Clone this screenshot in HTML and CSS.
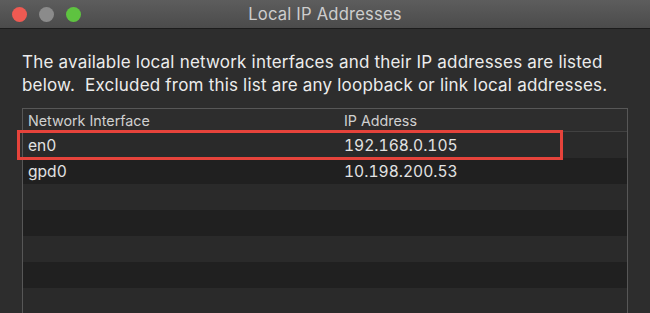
FILE: index.html
```html
<!DOCTYPE html>
<html lang="en">
<head>
  <meta charset="UTF-8" />
  <title>Local IP Addresses</title>
  <link rel="stylesheet" href="styles.css">
</head>
<body>
  <div class="window">
    <div class="titlebar">
      <div class="lights">
        <span class="light close"></span>
        <span class="light mini"></span>
        <span class="light zoom"></span>
      </div>
      <div class="title">Local IP Addresses</div>
      <div></div>
    </div>
    <div class="content">
      <p class="intro">The available local network interfaces and their IP addresses are listed below.&nbsp; Excluded from this list are any loopback or link local addresses.</p>
      <div class="table">
        <div class="row head">
          <div class="cell">Network Interface</div>
          <div class="cell">IP Address</div>
        </div>
        <div class="row">
          <div class="cell">en0</div>
          <div class="cell">192.168.0.105</div>
        </div>
        <div class="row">
          <div class="cell">gpd0</div>
          <div class="cell">10.198.200.53</div>
        </div>
        <div class="row"></div>
        <div class="row"></div>
        <div class="row"></div>
        <div class="row"></div>
        <div class="row"></div>
        <div class="mark"></div>
      </div>
    </div>
  </div>
</body>
</html>
```

FILE: styles.css
```css
body {
  margin: 0;
  padding: 0;
  background: #2d2d2d;
  font-family: 'Inter', 'Noto Sans', sans-serif;
  color: #e2e2e2;
}
.window {
  width: 650px;
  height: 313px;
  overflow: hidden;
  background: #2d2d2d;
}
.titlebar {
  height: 28px;
  display: grid;
  grid-template-columns: 1fr auto 1fr;
  align-items: center;
  background: linear-gradient(#5d5d5d, #4b4b4b);
  border-bottom: 1px solid #1c1c1c;
}
.lights {
  display: flex;
  gap: 12px;
  padding-left: 12px;
}
.light {
  width: 15px;
  height: 15px;
  border-radius: 50%;
}
.close { background: #ee5a52; }
.mini { background: #8b8b8b; }
.zoom { background: #5ec340; }
.title {
  font-size: 16.6px;
  letter-spacing: 0.2px;
  color: #cdcdcd;
}
.content {
  padding: 0 22px 0 22px;
}
.intro {
  margin: 22px 0 0;
  font-size: 17px;
  letter-spacing: 0.2px;
  line-height: 23px;
  color: #ececec;
}
.table {
  position: relative;
  margin-top: 11px;
  border: 1px solid #575757;
  border-bottom: none;
}
.row {
  display: grid;
  grid-template-columns: 316px 1fr;
  height: 26px;
  align-items: center;
  background: #2a2a2a;
}
.row:nth-child(odd) {
  background: #202020;
}
.row.head {
  height: 22px;
  background: #2d2d2d;
  border-bottom: 1px solid #414141;
}
.cell {
  padding-left: 5px;
  font-size: 15.6px;
  font-feature-settings: "tnum";
}
.head .cell {
  font-size: 14.3px;
  font-feature-settings: normal;
  color: #d0d0d0;
}
.mark {
  position: absolute;
  left: -6px;
  top: 21px;
  width: 540px;
  height: 24px;
  border: 3px solid #e5433b;
}
```
